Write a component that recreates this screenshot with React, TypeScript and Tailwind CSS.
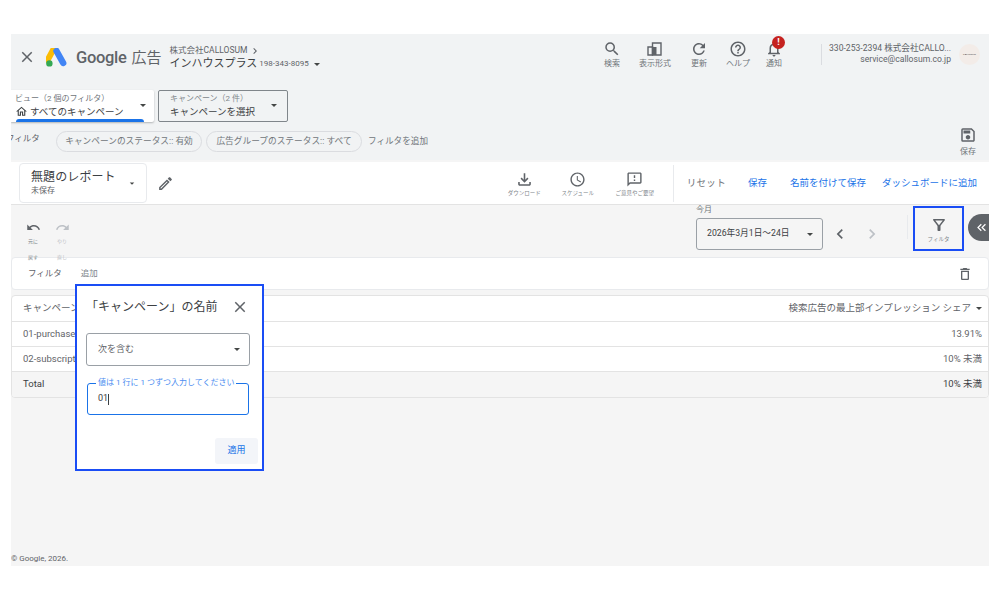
import React from 'react';
import {
  MdClose,
  MdSearch,
  MdRefresh,
  MdHelpOutline,
  MdNotificationsNone,
  MdOutlineSave,
  MdOutlineHome,
  MdOutlineEdit,
  MdOutlineFileDownload,
  MdAccessTime,
  MdOutlineFeedback,
  MdUndo,
  MdRedo,
  MdChevronLeft,
  MdChevronRight,
  MdKeyboardDoubleArrowLeft,
  MdOutlineDelete,
  MdOutlineFilterAlt,
} from 'react-icons/md';

const FONT = 'font-["Roboto","Noto_Sans_CJK_JP",sans-serif]';

const Caret = ({ className = '' }: { className?: string }) => (
  <span className={`inline-block w-0 h-0 border-x-[3.5px] border-x-transparent border-t-[3.5px] border-t-[#444746] ${className}`} />
);

const GoogleAdsLogo = () => (
  <svg width="21" height="19" viewBox="0 0 21 19">
    <path d="M7.2 1.8 L1.6 12" stroke="#fbbc04" strokeWidth="6" strokeLinecap="round" />
    <path d="M10.5 3 L17.2 15" stroke="#4285f4" strokeWidth="6.4" strokeLinecap="round" />
    <circle cx="3.4" cy="15.4" r="3.2" fill="#34a853" />
  </svg>
);

const LayoutIcon = () => (
  <svg width="15" height="15" viewBox="0 0 15 15" fill="none" className="-ml-[2px]">
    <path d="M1 6h4.5v8H1z" stroke="#5f6368" strokeWidth="1.4" />
    <path d="M5.5 2H14v12H5.5z" stroke="#5f6368" strokeWidth="1.4" />
    <path d="M5.5 6h4v8h-4z" fill="#5f6368" />
  </svg>
);

const TopAction = ({ icon, label, width }: { icon: React.ReactNode; label: string; width: string }) => (
  <div className={`flex flex-col items-center ${width}`}>
    <div className="h-[17px] flex items-center justify-center relative">{icon}</div>
    <span className="text-[8px] leading-[12px] mt-[1px] text-[#70757a] whitespace-nowrap">{label}</span>
  </div>
);

const ReportAction = ({ icon, label, width }: { icon: React.ReactNode; label: string; width: string }) => (
  <div className={`flex flex-col items-center pt-[3px] ${width}`}>
    <div className="h-[17px] flex items-center justify-center">{icon}</div>
    <span className="text-[5.5px] leading-[10px] text-[#80868b] whitespace-nowrap">{label}</span>
  </div>
);

const Chip = ({ children, width }: { children: React.ReactNode; width: string }) => (
  <div className={`h-[21px] ${width} rounded-full border border-[#dadce0] flex items-center justify-center text-[8.7px] text-[#70757a] whitespace-nowrap`}>
    {children}
  </div>
);

const rows = [
  { name: '01-purchase', value: '13.91%' },
  { name: '02-subscript', value: '10% 未満' },
];

export default function App() {
  return (
    <div className={`w-[1000px] h-[600px] bg-white pt-[34px] pl-[11px] overflow-hidden ${FONT}`}>
      <div className="relative w-[978px] h-[532px] bg-[#f5f5f5] overflow-hidden">
        {/* ヘッダー */}
        <div className="h-[126px] bg-[#f1f3f4] flex flex-col">
          <div className="h-[50px] flex items-start pt-[10px]">
            <MdClose size={18} className="ml-[7px] mt-[4px] text-[#5f6368]" />
            <div className="ml-[10px] mt-[4px]"><GoogleAdsLogo /></div>
            <span className="ml-[9px] mt-[1px] text-[16.5px] leading-[26px] text-[#5f6368] font-medium tracking-[-0.3px]">Google</span>
            <span className="ml-[5px] mt-[1px] text-[15px] leading-[26px] text-[#5f6368]">広告</span>
            <div className="ml-[8px] flex flex-col">
              <div className="text-[8.5px] leading-[13px] text-[#5f6368] flex items-center gap-[2px]">
                株式会社CALLOSUM
                <MdChevronRight size={12} />
              </div>
              <div className="flex items-center">
                <span className="text-[11px] leading-[14px] text-[#3c4043]">インハウスプラス</span>
                <span className="ml-[2px] text-[8px] text-[#5f6368]">198-343-8095</span>
                <Caret className="ml-[5px]" />
              </div>
            </div>
            <div className="ml-auto -mt-[4px] flex items-start">
              <TopAction width="w-[40px]" label="検索" icon={<MdSearch size={18} className="text-[#5f6368]" />} />
              <TopAction width="w-[46px]" label="表示形式" icon={<LayoutIcon />} />
              <TopAction width="w-[42px]" label="更新" icon={<MdRefresh size={18} className="text-[#5f6368]" />} />
              <TopAction width="w-[36px]" label="ヘルプ" icon={<MdHelpOutline size={18} className="text-[#5f6368]" />} />
              <TopAction
                width="w-[36px]"
                label="通知"
                icon={
                  <>
                    <MdNotificationsNone size={18} className="text-[#5f6368]" />
                    <span className="absolute -top-[4px] left-[7px] w-[13px] h-[13px] rounded-full bg-[#c5221f] text-white text-[9px] leading-[13px] font-bold text-center">!</span>
                  </>
                }
              />
              <div className="ml-[29px] w-px h-[21px] bg-[#dadce0] mt-[4px]" />
              <div className="ml-[7px] w-[122px] text-right text-[8.6px] leading-[11px] text-[#5f6368] mt-[3px]">
                <div className="whitespace-nowrap">330-253-2394 株式会社CALLO...</div>
                <div className="whitespace-nowrap">service@callosum.co.jp</div>
              </div>
              <div className="ml-[8px] mr-[9px] mt-[4px] w-[21px] h-[21px] rounded-full bg-[#f3ece8] flex items-center justify-center text-[2.5px] text-[#555] overflow-hidden">
                CALLOSUM
              </div>
            </div>
          </div>

          <div className="h-[32px] mt-[6px] flex">
            <div className="relative w-[143px] h-[32px] bg-white rounded-r-[2px] shadow-[0_1px_2px_rgba(60,64,67,0.35)] pl-[4px] pt-[3px]">
              <div className="text-[8px] leading-[12px] text-[#70757a] whitespace-nowrap">ビュー（2 個のフィルタ）</div>
              <div className="flex items-center gap-[2px] text-[9.5px] leading-[13px] text-[#3c4043] whitespace-nowrap">
                <MdOutlineHome size={13} />
                すべてのキャンペーン
              </div>
              <Caret className="absolute right-[8px] top-[14px]" />
              <div className="absolute left-[5px] bottom-[0px] w-[128px] h-[3px] rounded-t-[3px] bg-[#1a73e8]" />
            </div>
            <div className="relative ml-[4px] w-[130px] h-[32px] rounded-[2px] border border-[#80868b] pl-[11px] pt-[2px]">
              <div className="text-[8px] leading-[12px] text-[#80868b] whitespace-nowrap">キャンペーン（2 件）</div>
              <div className="text-[9.5px] leading-[13px] text-[#3c4043] whitespace-nowrap">キャンペーンを選択</div>
              <Caret className="absolute right-[10px] top-[13px]" />
            </div>
          </div>

          <div className="relative flex items-start mt-[9px]">
            <span className="w-[34px] shrink-0 -ml-[5px] text-[8.5px] leading-[14px] text-[#5f6368] whitespace-nowrap">フィルタ</span>
            <div className="ml-[16px]"><Chip width="w-[146px]">キャンペーンのステータス:: 有効</Chip></div>
            <div className="ml-[4px]"><Chip width="w-[156px]">広告グループのステータス:: すべて</Chip></div>
            <span className="ml-[6px] text-[8.6px] leading-[21px] text-[#70757a]">フィルタを追加</span>
            <div className="ml-auto mr-[12px] -mt-[5px] flex flex-col items-center">
              <MdOutlineSave size={18} className="text-[#5f6368]" />
              <span className="text-[8px] leading-[12px] mt-[2px] text-[#70757a]">保存</span>
            </div>
          </div>
        </div>

        {/* レポート名バー */}
        <div className="mt-[2px] h-[43px] bg-white border-b border-[#e3e3e3] flex items-center">
          <div className="relative ml-[8px] w-[128px] h-[40px] rounded-[4px] border border-[#e8eaed] pl-[11px] pt-[5px]">
            <div className="text-[12px] leading-[16px] text-[#3c4043] tracking-[0.1px]">無題のレポート</div>
            <div className="text-[8px] leading-[11px] text-[#5f6368]">未保存</div>
            <Caret className="absolute right-[11px] top-[18px] scale-75" />
          </div>
          <MdOutlineEdit size={17} className="ml-[10px] text-[#5f6368]" />
          <div className="ml-auto flex items-center">
            <ReportAction width="w-[53px]" label="ダウンロード" icon={<MdOutlineFileDownload size={19} className="text-[#5f6368]" />} />
            <ReportAction width="w-[54px]" label="スケジュール" icon={<MdAccessTime size={17} className="text-[#5f6368]" />} />
            <ReportAction width="w-[60px]" label="ご意見やご要望" icon={<MdOutlineFeedback size={17} className="text-[#5f6368]" />} />
            <div className="ml-[8px] w-px h-[37px] bg-[#e8eaed]" />
            <div className="ml-[13px] mr-[12px] flex items-center text-[9.5px] text-[#1a73e8] whitespace-nowrap">
              <span className="text-[#70757a] tracking-[0.3px]">リセット</span>
              <span className="ml-[22px]">保存</span>
              <span className="ml-[23px]">名前を付けて保存</span>
              <span className="ml-[16px]">ダッシュボードに追加</span>
            </div>
          </div>
        </div>

        {/* ツールバー */}
        <div className="relative z-10 h-[52px] flex items-start">
          <div className="ml-[15px] mt-[15px] flex">
            <div className="w-[14px] flex flex-col items-center">
              <MdUndo size={15} className="text-[#5f6368]" />
              <span className="-mt-[2px] text-[5px] leading-[16px] text-[#80868b] whitespace-nowrap">元に</span>
              <span className="text-[5px] leading-[16px] text-[#80868b] whitespace-nowrap">戻す</span>
            </div>
            <div className="ml-[15px] w-[14px] flex flex-col items-center">
              <MdRedo size={15} className="text-[#bdc1c6]" />
              <span className="-mt-[2px] text-[5px] leading-[16px] text-[#bdc1c6] whitespace-nowrap">やり</span>
              <span className="text-[5px] leading-[16px] text-[#bdc1c6] whitespace-nowrap">直し</span>
            </div>
          </div>
          <div className="ml-auto flex items-start">
            <div className="flex flex-col">
              <span className="text-[8px] leading-[10px] mt-[0px] text-[#70757a]">今月</span>
              <div className="mt-[3px] w-[127px] h-[32px] rounded-[3px] border border-[#9aa0a6] flex items-center pl-[10px] pr-[9px] justify-between text-[8.7px] text-[#3c4043]">
                <span className="whitespace-nowrap">2026年3月1日〜24日</span>
                <Caret />
              </div>
            </div>
            <MdChevronLeft size={20} className="ml-[7px] mt-[19px] text-[#5f6368]" />
            <MdChevronRight size={20} className="ml-[12px] mt-[19px] text-[#bdc1c6]" />
            <div className="ml-[25px] mt-[10px] w-px h-[24px] bg-[#e8eaed]" />
            <div className="ml-[5px] mt-[1px] w-[51px] h-[45px] border-2 border-[#1a4df5] flex flex-col items-center pt-[8px]">
              <MdOutlineFilterAlt size={18} className="text-[#5f6368]" />
              <span className="text-[5.5px] leading-[8px] mt-[1px] text-[#80868b]">フィルタ</span>
            </div>
            <div className="ml-[4px] mt-[9px] w-[21px] h-[27px] bg-[#5f6368] rounded-l-full flex items-center justify-end">
              <MdKeyboardDoubleArrowLeft size={15} className="text-white" />
            </div>
          </div>
        </div>

        {/* フィルタカード */}
        <div className="relative h-[33px] bg-white rounded-[4px] border border-[#e8eaed] flex items-center pl-[16px] text-[8.5px]">
          <span className="text-[#5f6368]">フィルタ</span>
          <span className="ml-[19px] text-[#80868b]">追加</span>
          <MdOutlineDelete size={16} className="ml-auto mr-[15px] text-[#5f6368]" />
        </div>

        {/* テーブル */}
        <div className="mt-[5px] w-full bg-white rounded-[4px] border border-[#e3e3e3] overflow-hidden text-[9.5px] text-[#5f6368]">
          <div className="h-[26px] flex items-center justify-between pl-[11px] pr-[6px] border-b border-[#e3e3e3]">
            <span>キャンペーン</span>
            <span className="flex items-center gap-[5px]">
              検索広告の最上部インプレッション シェア
              <Caret />
            </span>
          </div>
          {rows.map((row) => (
            <div key={row.name} className="h-[25px] flex items-center justify-between pl-[11px] pr-[6px] border-b border-[#e3e3e3]">
              <span>{row.name}</span>
              <span>{row.value}</span>
            </div>
          ))}
          <div className="h-[25px] flex items-center justify-between pl-[11px] pr-[6px] bg-[#f5f5f5] text-[#3c4043]">
            <span>Total</span>
            <span>10% 未満</span>
          </div>
        </div>

        <div className="absolute left-0 bottom-[1px] text-[8px] leading-[12px] text-[#5f6368]">© Google, 2026.</div>

        {/* フィルタのポップアップ */}
        <div className="absolute left-[64px] top-[250px] w-[189px] h-[187px] bg-white border-2 border-[#1a4df5] flex flex-col pl-[9px] pr-[10px]">
          <div className="flex items-center justify-between mt-[11px] h-[20px]">
            <span className="text-[12px] text-[#3c4043] whitespace-nowrap">「キャンペーン」の名前</span>
            <MdClose size={18} className="mr-[3px] text-[#5f6368]" />
          </div>
          <div className="mt-[16px] h-[33px] w-[164px] rounded-[3px] border border-[#9aa0a6] flex items-center justify-between pl-[11px] pr-[9px] text-[9px] text-[#5f6368]">
            次を含む
            <Caret />
          </div>
          <div className="relative mt-[17px] h-[32px] w-[162px] ml-[1px] rounded-[3px] border-[1.5px] border-[#1a73e8] flex items-center pl-[10px] text-[9px] text-[#3c4043]">
            <span className="absolute left-[8px] -top-[6px] px-[2px] bg-white text-[8px] leading-[10px] text-[#4c8df0] whitespace-nowrap">値は 1 行に 1 つずつ入力してください</span>
            01<span className="w-px h-[11px] bg-[#3c4043]" />
          </div>
          <div className="mt-auto mb-[5px] -mr-[6px] self-end w-[43px] h-[26px] rounded-[3px] bg-[#f3f5f9] flex items-center justify-center text-[9px] text-[#1a73e8]">
            適用
          </div>
        </div>
      </div>
    </div>
  );
}
